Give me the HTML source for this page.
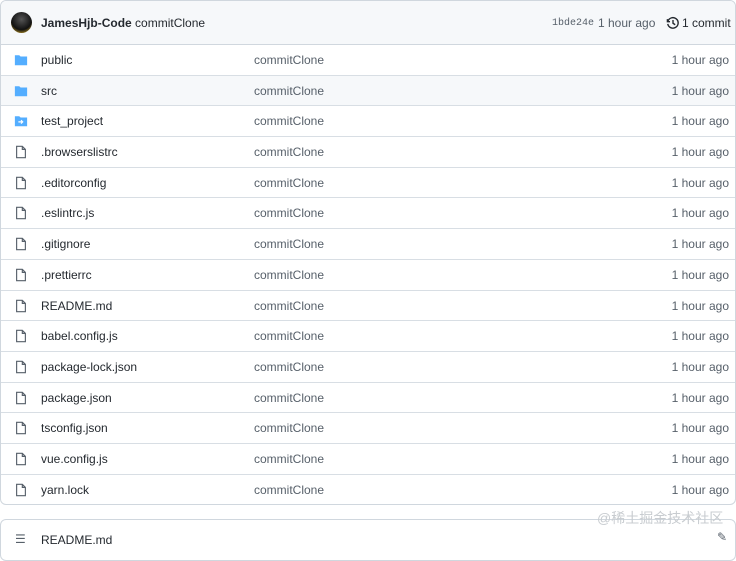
<html><head><style>
body{margin:0;background:#fff;font-family:"Liberation Sans",sans-serif;font-size:12px;color:#24292f;width:736px;height:542px;overflow:hidden;position:relative}
.box{position:absolute;left:0;top:0;width:734px;border:1px solid #d0d7de;border-radius:6px;height:503px;overflow:hidden}
.hdr{height:43px;background:#f6f8fa;border-bottom:1px solid #d0d7de;position:relative}
.av{position:absolute;left:10px;top:11px;width:21px;height:21px;border-radius:50%;background:radial-gradient(circle at 50% 35%,#555 0,#222 45%,#111 60%,#c9a227 90%)}
.row{height:29.7px;border-top:1px solid #d8dee4;position:relative;line-height:30px}
.row:first-of-type{border-top:none}
.n{position:absolute;left:40px}.m{position:absolute;left:253px;color:#57606a}.t{position:absolute;right:6px;color:#57606a}
.ic{position:absolute;left:13px;top:8px}
.box2{position:absolute;left:0;top:519px;width:734px;height:40px;border:1px solid #d0d7de;border-radius:6px}
</style></head><body>
<div class="box">
<div class="hdr"><div class="av"></div>
<span style="position:absolute;left:40px;top:15px"><b style="font-weight:600">JamesHjb-Code</b> commitClone</span>
<span style="position:absolute;left:551px;top:17px;font-family:'Liberation Mono',monospace;font-size:10px;color:#57606a">1bde24e</span>
<span style="position:absolute;left:597px;top:15px;color:#57606a">1 hour ago</span>
<svg style="position:absolute;left:665px;top:15px" width="14" height="14" viewBox="0 0 16 16"><path d="M1.6 3.5V6.5H4.6M2.2 6A6 6 0 1 1 2 9" fill="none" stroke="#24292f" stroke-width="1.6"/><path d="M8 4.5V8.3L10.5 10" fill="none" stroke="#24292f" stroke-width="1.6"/></svg>
<span style="position:absolute;left:681px;top:15px">1 commit</span></div>
<div id="rows"></div>
</div>
<div class="box2"><span style="position:absolute;left:14px;top:12px;color:#57606a">☰</span><span style="position:absolute;left:40px;top:13px">README.md</span><span style="position:absolute;right:8px;top:10px;color:#57606a">✎</span></div>
<div style="position:absolute;left:597px;top:508px;font-size:14px;color:#c8ccd0;font-family:'Liberation Sans','Noto Sans CJK SC',sans-serif">@稀土掘金技术社区</div>
<script>
var f=[["public",1],["src",1],["test_project",2],".browserslistrc",".editorconfig",".eslintrc.js",".gitignore",".prettierrc","README.md","babel.config.js","package-lock.json","package.json","tsconfig.json","vue.config.js","yarn.lock"];
var h="";f.forEach(function(x,i){var n=typeof x=="string"?x:x[0],k=typeof x=="string"?0:x[1];
var ic=k?'<svg class="ic" width="14" height="14" viewBox="0 0 16 16"><path d="M1 2.5h5l1.5 1.5H15v10H1z" fill="#54aeff"/>'+(k==2?'<path d="M5 9h5M8 7l2 2-2 2" stroke="#fff" stroke-width="1.3" fill="none"/>':'')+'</svg>':'<svg class="ic" width="14" height="14" viewBox="0 0 16 16"><path d="M3 1.5h6.5L13 5v9.5H3z M9.5 1.5V5H13" fill="none" stroke="#57606a" stroke-width="1.3"/></svg>';
h+='<div class="row" style="'+(i==1?'background:#f6f8fa;':'')+'">'+ic+'<span class="n">'+n+'</span><span class="m">commitClone</span><span class="t">1 hour ago</span></div>';});
document.getElementById("rows").innerHTML=h;
</script></body></html>
